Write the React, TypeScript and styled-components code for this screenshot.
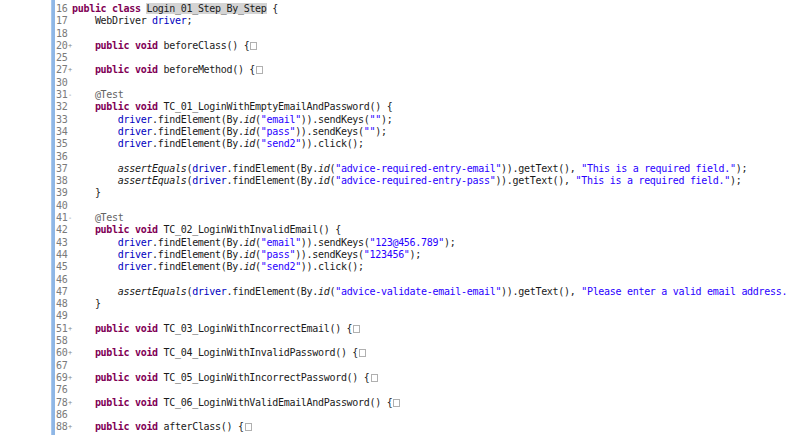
import React from "react";
import styled, { createGlobalStyle } from "styled-components";

const Global = createGlobalStyle`
  html, body { margin: 0; padding: 0; background: #ffffff; }
  #root { width: 800px; height: 435px; overflow: hidden; }
`;

const Page = styled.div`
  display: flex;
  width: 800px;
  height: 435px;
  background: #ffffff;
  overflow: hidden;
`;

const LeftBlank = styled.div`
  width: 51px;
  flex: none;
`;

const ChangeBar = styled.div`
  width: 4px;
  flex: none;
  background: #8fb7e6;
  border-left: 1px solid #a9c8ee;
  box-sizing: border-box;
`;

const Editor = styled.div`
  display: flex;
  flex-direction: column;
  padding-top: 3px;
  padding-left: 1px;
  font-family: "DejaVu Sans Mono", "Liberation Mono", monospace;
  font-size: 10px;
  letter-spacing: -0.3px;
  color: #1a1a1a;
  white-space: pre;
`;

const Row = styled.div`
  display: flex;
  height: 12.3px;
  line-height: 12.3px;
`;

const LineNo = styled.div`
  width: 16px;
  flex: none;
  color: #7a7a7a;
  position: relative;
`;

const FoldMark = styled.span<{ $open?: boolean }>`
  position: absolute;
  left: 12px;
  top: 0;
  font-size: 7px;
  color: #8a8a8a;
  letter-spacing: 0;
`;

const Code = styled.div`
  flex: none;
`;

const Kw = styled.span`
  color: #7f0055;
  font-weight: bold;
`;
const Str = styled.span`
  color: #2a00ff;
`;
const Field = styled.span`
  color: #0000c0;
`;
const Ital = styled.span`
  font-style: italic;
`;
const Ann = styled.span`
  color: #646464;
`;
const Hl = styled.span`
  background: #d4d4d4;
`;
const FoldBox = styled.span`
  display: inline-block;
  width: 7px;
  height: 8px;
  border: 1px solid #b0b0b0;
  box-sizing: border-box;
  vertical-align: -1px;
  margin-left: 1px;
`;

type Seg = [string, string];
type LineDef = { n: number; fold?: "open" | "closed"; segs: Seg[] };

const find = (id: string, tail: Seg[]): Seg[] => [
  ["p", "        "],
  ["f", "driver"],
  ["p", ".findElement(By."],
  ["i", "id"],
  ["p", "("],
  ["s", `"${id}"`],
  ["p", "))"],
  ...tail,
];

const assertLine = (id: string, msg: string, close: boolean): Seg[] => [
  ["p", "        "],
  ["i", "assertEquals"],
  ["p", "("],
  ["f", "driver"],
  ["p", ".findElement(By."],
  ["i", "id"],
  ["p", "("],
  ["s", `"${id}"`],
  ["p", ")).getText(), "],
  ["s", close ? `"${msg}"` : `"${msg}`],
  ["p", close ? ");" : ""],
];

const method = (name: string): Seg[] => [
  ["p", "    "],
  ["k", "public"],
  ["p", " "],
  ["k", "void"],
  ["p", ` ${name}() {`],
  ["box", ""],
];

const lines: LineDef[] = [
  { n: 16, segs: [["k", "public"], ["p", " "], ["k", "class"], ["p", " "], ["h", "Login_01_Step_By_Step"], ["p", " {"]] },
  { n: 17, segs: [["p", "    WebDriver "], ["f", "driver"], ["p", ";"]] },
  { n: 18, segs: [] },
  { n: 20, fold: "closed", segs: method("beforeClass") },
  { n: 25, segs: [] },
  { n: 27, fold: "closed", segs: method("beforeMethod") },
  { n: 30, segs: [] },
  { n: 31, fold: "open", segs: [["p", "    "], ["a", "@Test"]] },
  { n: 32, segs: [["p", "    "], ["k", "public"], ["p", " "], ["k", "void"], ["p", " TC_01_LoginWithEmptyEmailAndPassword() {"]] },
  { n: 33, segs: find("email", [["p", ".sendKeys("], ["s", '""'], ["p", ");"]]) },
  { n: 34, segs: find("pass", [["p", ".sendKeys("], ["s", '""'], ["p", ");"]]) },
  { n: 35, segs: find("send2", [["p", ".click();"]]) },
  { n: 36, segs: [] },
  { n: 37, segs: assertLine("advice-required-entry-email", "This is a required field.", true) },
  { n: 38, segs: assertLine("advice-required-entry-pass", "This is a required field.", true) },
  { n: 39, segs: [["p", "    }"]] },
  { n: 40, segs: [] },
  { n: 41, fold: "open", segs: [["p", "    "], ["a", "@Test"]] },
  { n: 42, segs: [["p", "    "], ["k", "public"], ["p", " "], ["k", "void"], ["p", " TC_02_LoginWithInvalidEmail() {"]] },
  { n: 43, segs: find("email", [["p", ".sendKeys("], ["s", '"123@456.789"'], ["p", ");"]]) },
  { n: 44, segs: find("pass", [["p", ".sendKeys("], ["s", '"123456"'], ["p", ");"]]) },
  { n: 45, segs: find("send2", [["p", ".click();"]]) },
  { n: 46, segs: [] },
  { n: 47, segs: assertLine("advice-validate-email-email", "Please enter a valid email address.", false) },
  { n: 48, segs: [["p", "    }"]] },
  { n: 49, segs: [] },
  { n: 51, fold: "closed", segs: method("TC_03_LoginWithIncorrectEmail") },
  { n: 58, segs: [] },
  { n: 60, fold: "closed", segs: method("TC_04_LoginWithInvalidPassword") },
  { n: 67, segs: [] },
  { n: 69, fold: "closed", segs: method("TC_05_LoginWithIncorrectPassword") },
  { n: 76, segs: [] },
  { n: 78, fold: "closed", segs: method("TC_06_LoginWithValidEmailAndPassword") },
  { n: 86, segs: [] },
  { n: 88, fold: "closed", segs: method("afterClass") },
];

const renderSeg = (seg: Seg, i: number) => {
  const [t, text] = seg;
  switch (t) {
    case "k":
      return <Kw key={i}>{text}</Kw>;
    case "s":
      return <Str key={i}>{text}</Str>;
    case "f":
      return <Field key={i}>{text}</Field>;
    case "i":
      return <Ital key={i}>{text}</Ital>;
    case "a":
      return <Ann key={i}>{text}</Ann>;
    case "h":
      return <Hl key={i}>{text}</Hl>;
    case "box":
      return <FoldBox key={i} />;
    default:
      return <React.Fragment key={i}>{text}</React.Fragment>;
  }
};

export default function App() {
  return (
    <>
      <Global />
      <Page>
        <LeftBlank />
        <ChangeBar />
        <Editor>
          {lines.map((l) => (
            <Row key={l.n}>
              <LineNo>
                {l.n}
                {l.fold && <FoldMark>{l.fold === "open" ? "-" : "+"}</FoldMark>}
              </LineNo>
              <Code>{l.segs.map(renderSeg)}</Code>
            </Row>
          ))}
        </Editor>
      </Page>
    </>
  );
}
